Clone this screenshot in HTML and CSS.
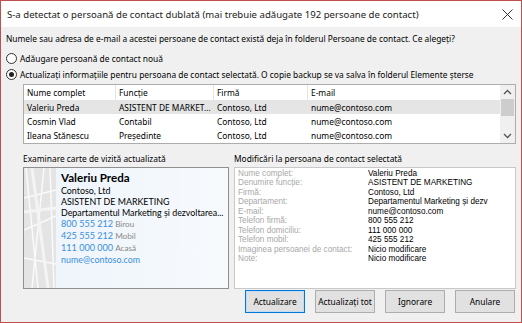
FILE: index.html
```html
<!DOCTYPE html>
<html lang="ro">

<head>
    <meta charset="UTF-8">
    <title>Persoană de contact dublată</title>
    <link rel="stylesheet" href="styles.css">
</head>

<body>

    <div class="dialog">
        <header class="titlebar">
            <span class="title">S-a detectat o persoană de contact dublată (mai trebuie adăugate 192 persoane de contact)</span>
            <svg class="close" width="11" height="11" viewBox="0 0 11 11">
                <path d="M0.5 0.5 L10.5 10.5 M10.5 0.5 L0.5 10.5" stroke="#333" stroke-width="1" fill="none" />
            </svg>
        </header>

        <main class="content">
            <p class="intro">Numele sau adresa de e-mail a acestei persoane de contact există deja în folderul Persoane de contact. Ce alegeți?</p>

            <div class="radio">
                <span class="dot"></span>
                <span>Adăugare persoană de contact nouă</span>
            </div>
            <div class="radio checked">
                <span class="dot"></span>
                <span>Actualizați informațiile pentru persoana de contact selectată. O copie backup se va salva în folderul Elemente șterse</span>
            </div>

            <div class="list">
                <div class="list-rows">
                    <div class="row head">
                        <span class="c1">Nume complet</span>
                        <span class="c2">Funcție</span>
                        <span class="c3">Firmă</span>
                        <span class="c4">E-mail</span>
                    </div>
                    <div class="row selected">
                        <span class="c1">Valeriu Preda</span>
                        <span class="c2">ASISTENT DE MARKET...</span>
                        <span class="c3">Contoso, Ltd</span>
                        <span class="c4">nume@contoso.com</span>
                    </div>
                    <div class="row">
                        <span class="c1">Cosmin Vlad</span>
                        <span class="c2">Contabil</span>
                        <span class="c3">Contoso, Ltd</span>
                        <span class="c4">nume@contoso.com</span>
                    </div>
                    <div class="row">
                        <span class="c1">Ileana Stănescu</span>
                        <span class="c2">Președinte</span>
                        <span class="c3">Contoso, Ltd</span>
                        <span class="c4">nume@contoso.com</span>
                    </div>
                </div>
                <div class="scrollbar">
                    <svg width="15" height="14" viewBox="0 0 15 14">
                        <path d="M4 9 L7.5 5.5 L11 9" stroke="#555" stroke-width="1.3" fill="none" />
                    </svg>
                    <div class="track"><div class="thumb"></div></div>
                    <svg width="15" height="14" viewBox="0 0 15 14">
                        <path d="M4 5 L7.5 8.5 L11 5" stroke="#555" stroke-width="1.3" fill="none" />
                    </svg>
                </div>
            </div>

            <div class="panels">
                <section class="panel left">
                    <div class="panel-label">Examinare carte de vizită actualizată</div>
                    <div class="card">
                        <div class="card-strip">
                            <svg width="32" height="120" viewBox="0 0 32 120">
                                <path d="M2 0 L14 120 M20 0 L8 120 M0 30 L32 22 M0 62 L32 48 M26 0 L30 120 M0 90 L32 96" stroke="#fafafa" stroke-width="1.5" fill="none" />
                                <path d="M8 0 L24 120 M0 44 L32 40" stroke="#f4f4f4" stroke-width="3" fill="none" />
                            </svg>
                        </div>
                        <div class="card-body">
                            <div class="card-name">Valeriu Preda</div>
                            <div>Contoso, Ltd</div>
                            <div>ASISTENT DE MARKETING</div>
                            <div>Departamentul Marketing și dezvoltarea...</div>
                            <div><span class="blue">800 555 212</span><span class="muted">Birou</span></div>
                            <div><span class="blue">425 555 212</span><span class="muted">Mobil</span></div>
                            <div><span class="blue">111 000 000</span><span class="muted">Acasă</span></div>
                            <div class="blue mail">nume@contoso.com</div>
                        </div>
                    </div>
                </section>

                <section class="panel right">
                    <div class="panel-label">Modificări la persoana de contact selectată</div>
                    <div class="changes">
                        <span class="key">Nume complet:</span><span>Valeriu Preda</span>
                        <span class="key">Denumire funcție:</span><span>ASISTENT DE MARKETING</span>
                        <span class="key">Firmă:</span><span>Contoso, Ltd</span>
                        <span class="key">Departament:</span><span>Departamentul Marketing și dezv</span>
                        <span class="key">E-mail:</span><span>nume@contoso.com</span>
                        <span class="key">Telefon firmă:</span><span>800 555 212</span>
                        <span class="key">Telefon domiciliu:</span><span>111 000 000</span>
                        <span class="key">Telefon mobil:</span><span>425 555 212</span>
                        <span class="key">Imaginea persoanei de contact:</span><span>Nicio modificare</span>
                        <span class="key">Note:</span><span>Nicio modificare</span>
                    </div>
                </section>
            </div>

            <footer class="buttons">
                <button class="btn default">Actualizare</button>
                <button class="btn">Actualizați tot</button>
                <button class="btn">Ignorare</button>
                <button class="btn">Anulare</button>
            </footer>
        </main>
    </div>

</body>

</html>
```

FILE: styles.css
```css
body {
    margin: 0;
    font-family: "Noto Sans", "Open Sans", sans-serif;
    color: #000;
}

.dialog {
    width: 522px;
    height: 323px;
    box-sizing: border-box;
    border: 1px solid #c0504d;
    background-color: #f0f0f0;
    display: flex;
    flex-direction: column;
}

.titlebar {
    height: 26px;
    background-color: #fff;
    display: flex;
    align-items: center;
    justify-content: space-between;
    padding: 0 8px 0 6px;
}

.title {
    font-size: 9.6px;
    color: #222;
}

.close {
    margin-top: 1px;
}

.content {
    flex: 1;
    padding: 0 5px 0 5px;
    display: flex;
    flex-direction: column;
}

.intro {
    margin: 6px 0 0 0;
    font-size: 8.4px;
    line-height: 12px;
}

.radio {
    display: flex;
    align-items: center;
    gap: 3px;
    font-size: 8.4px;
    height: 13px;
}

.radio:first-of-type {
    margin-top: 7px;
}

.radio + .radio {
    margin-top: 3px;
}

.dot {
    width: 11px;
    height: 11px;
    box-sizing: border-box;
    border: 1px solid #333;
    border-radius: 50%;
    background-color: #fff;
    display: flex;
    align-items: center;
    justify-content: center;
}

.checked .dot::after {
    content: "";
    width: 5px;
    height: 5px;
    border-radius: 50%;
    background-color: #222;
}

.list {
    margin: 3px 0 0 17px;
    height: 58px;
    border: 1px solid #adadad;
    background-color: #fff;
    display: flex;
}

.list-rows {
    flex: 1;
}

.row {
    display: flex;
    height: 14px;
    align-items: center;
    font-size: 8.4px;
}

.row.head {
    height: 15px;
}

.row.head span {
    border-right: 1px solid #e5e5e5;
    height: 15px;
    line-height: 15px;
}

.row.selected {
    background-color: #e5e5e5;
}

.row span {
    box-sizing: border-box;
    padding-left: 3px;
    white-space: nowrap;
    overflow: hidden;
}

.c1 {
    width: 92px;
}

.c2 {
    width: 98px;
}

.c3 {
    width: 94px;
}

.c4 {
    flex: 1;
    border-right: none !important;
}

.scrollbar {
    width: 15px;
    background-color: #f0f0f0;
    display: flex;
    flex-direction: column;
}

.track {
    flex: 1;
}

.thumb {
    height: 17px;
    background-color: #cdcdcd;
    margin: 0 1px;
}

.panels {
    margin: 9px 0 0 17px;
    display: flex;
    gap: 5px;
}

.panel-label {
    font-size: 8.4px;
    height: 12px;
    line-height: 12px;
    margin-bottom: 2px;
}

.left {
    width: 206px;
}

.right {
    flex: 1;
}

.card {
    height: 122px;
    box-sizing: border-box;
    border: 1px solid #8f8f8f;
    background-image: linear-gradient(90deg, #edf4fb, #f7fafd);
    display: flex;
}

.card-strip {
    width: 32px;
    background-color: #e4e4e4;
    overflow: hidden;
}

.card-body {
    padding: 3px 0 0 5px;
    font-family: Lato, "Noto Sans", sans-serif;
    font-size: 8.9px;
    line-height: 11px;
    white-space: nowrap;
}

.card-name {
    font-size: 11.6px;
    font-weight: bold;
    line-height: 14px;
}

.blue {
    color: #3a8fe0;
    font-size: 9.1px;
}

.mail {
    font-size: 8.9px;
}

.muted {
    color: #8a8a8a;
    font-size: 8.2px;
    margin-left: 2px;
}

.changes {
    height: 122px;
    box-sizing: border-box;
    border: 1px solid #c8c8c8;
    background-color: #fff;
    padding: 1px 4px 0 3px;
    display: grid;
    grid-template-columns: 130px 1fr;
    grid-auto-rows: 9.45px;
    align-content: start;
    font-family: "Liberation Sans", Arial, sans-serif;
    font-size: 8.2px;
    line-height: 9.45px;
    white-space: nowrap;
    overflow: hidden;
}

.changes span {
    overflow: hidden;
}

.changes .key {
    color: #a8a8a8;
}

.buttons {
    margin-top: 1px;
    display: flex;
    justify-content: flex-end;
    gap: 10px;
    padding-right: 1px;
}

.btn {
    width: 60px;
    height: 23px;
    padding: 0;
    font-family: inherit;
    font-size: 8.4px;
    color: #000;
    background-color: #e1e1e1;
    border: 1px solid #adadad;
}

.btn.default {
    border: 1px solid #0078d7;
    box-shadow: inset 0 0 0 1px #c3dcf2;
}
```
